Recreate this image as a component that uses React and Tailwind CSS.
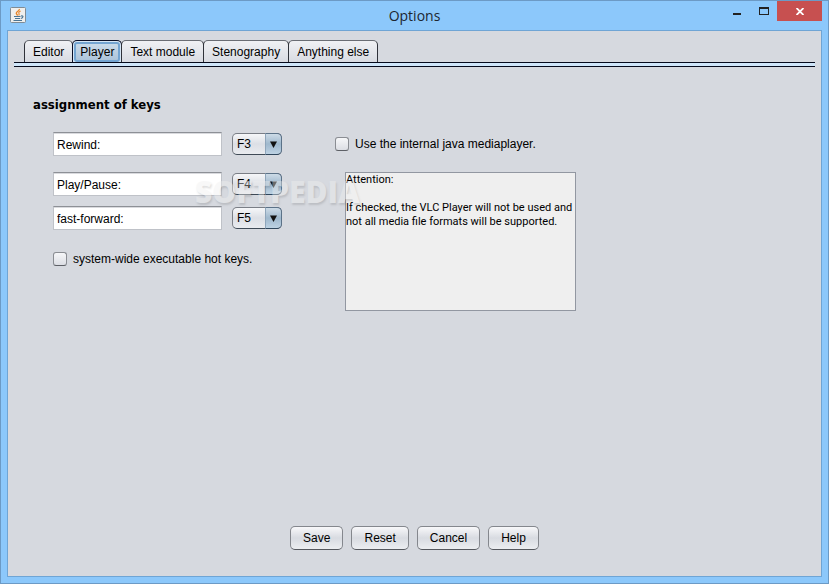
import { useState } from "react";

const TABS = ["Editor", "Player", "Text module", "Stenography", "Anything else"];
const KEYS = ["F1", "F2", "F3", "F4", "F5", "F6", "F7", "F8", "F9", "F10", "F11", "F12"];

const NOTE =
  "Attention:\n\nIf checked, the VLC Player will not be used and not all media file formats will be supported.";

function JavaIcon() {
  return (
    <svg width="16" height="16" viewBox="0 0 16 16" fill="none">
      <rect x="0.5" y="0.5" width="15" height="15" rx="1" fill="#efefed" stroke="#7f8c96" />
      <path d="M9.300 2C9.800 4 6.300 4.300 6.300 6.200C6.300 7.300 7.500 7.600 7.600 8.600" stroke="#e8862a" strokeWidth="1.400" />
      <path d="M10.600 4C9 4.800 8.300 5.500 9 6.500C9.400 7.200 9.200 7.800 8.700 8.400" stroke="#e8862a" strokeWidth="1.100" />
      <path d="M4 9.500H10.500M5 11.500H10M3.500 13.500H12" stroke="#4a7595" strokeWidth="1.200" />
      <path d="M11 9C13.800 8.300 13.400 11 10.800 11.500" stroke="#4a7595" strokeWidth="1.200" />
    </svg>
  );
}

function TitleBar() {
  return (
    <header className="grid h-[29px] grid-cols-[1fr_auto_1fr] items-start px-[6px]">
      <div className="pt-[6px] pl-[3px]">
        <JavaIcon />
      </div>
      <h1 className="pt-[5px] font-['Open_Sans',sans-serif] text-[14px] leading-5 text-[#1c2630]">
        Options
      </h1>
      <div className="flex justify-end">
        <button type="button" aria-label="Minimize" className="flex h-5 w-[27px] justify-center pt-3">
          <span className="h-[2px] w-2 bg-[#222]" />
        </button>
        <button type="button" aria-label="Maximize" className="flex h-5 w-[27px] justify-center pt-[6px]">
          <span className="h-2 w-[10px] border border-t-2 border-[#222]" />
        </button>
        <button type="button" aria-label="Close" className="flex h-5 w-[45px] items-center justify-center bg-[#c75050]">
          <svg width="8" height="7" viewBox="0 0 8 7" stroke="#fff" strokeWidth="1.800">
            <path d="M0.500 0L7.500 7M7.500 0L0.500 7" />
          </svg>
        </button>
      </div>
    </header>
  );
}

function Tab({ name, selected, onSelect }) {
  return (
    <button
      type="button"
      role="tab"
      aria-selected={selected}
      onClick={onSelect}
      className={
        selected
          ? "-ml-px h-[22px] rounded-t-[5px] border border-b-0 border-[#0a0f26] bg-[#d6e6f5] p-px"
          : "-ml-px h-[22px] rounded-t-[5px] border border-b-0 border-[#2f323a] border-t-[#6a6d74] bg-linear-to-b from-[#f0f1f4] to-[#d8dbe2] p-px"
      }
    >
      <span
        className={
          selected
            ? "flex h-5 items-center rounded-[3px] border-2 border-[#73a4d1] bg-linear-to-b from-[#c9dae9] to-[#adc4da] px-1"
            : "flex h-5 items-center px-[7px]"
        }
      >
        {name}
      </span>
    </button>
  );
}

function KeyRow({ label, initialKey }) {
  const [key, setKey] = useState(initialKey);

  return (
    <div className="flex items-center gap-[10px]">
      <input
        type="text"
        aria-label={label}
        defaultValue={label}
        className="h-6 w-[169px] border border-[#bfc2c8] border-t-[#8d9096] bg-white px-[3px] pt-[2px] inset-shadow-[0_1px_0_#d9dade]"
      />
      <div className="relative">
        <select
          aria-label={label}
          value={key}
          onChange={(e) => setKey(e.target.value)}
          className="block h-[22px] w-[50px] appearance-none rounded-[5px] border border-[#7a7e86] border-b-[#3f4a56] bg-linear-to-b from-[#f6f7f9] via-[#dcdfe5] to-[#e9ebef] pl-1"
        >
          {KEYS.map((k) => (
            <option key={k}>{k}</option>
          ))}
        </select>
        <span className="pointer-events-none absolute top-0 right-0 flex h-[22px] w-[17px] items-center justify-center rounded-r-[5px] border border-[#5b7288] border-b-[#2f465c] border-l-[#8fa6bb] bg-linear-to-b from-[#cddbe7] via-[#9fb8cd] to-[#bdd2e3]">
          <svg width="7" height="7" viewBox="0 0 7 7" fill="#111">
            <path d="M0 0.500H7L3.500 7Z" />
          </svg>
        </span>
      </div>
    </div>
  );
}

function CheckOption({ label }) {
  return (
    <label className="flex items-center gap-[6px]">
      <input
        type="checkbox"
        className="size-[14px] appearance-none rounded-[3px] border border-[#8a8d93] border-b-[#5d6066] bg-linear-to-b from-[#f6f7f9] to-[#dcdee4] checked:bg-[#73a4d1]"
      />
      {label}
    </label>
  );
}

export default function App() {
  const [tab, setTab] = useState("Player");

  return (
    <div className="flex h-screen flex-col border border-[#6c9ac5] bg-[#8cc8fb] pb-[6px] font-['Liberation_Sans',Arial,sans-serif] text-[12px] leading-4 text-black">
      <TitleBar />
      <main className="relative mx-[6px] flex flex-1 flex-col border border-[#6fa5d5] bg-[#d6d9df] px-[6px] pt-[9px] pb-[26px]">
        <div role="tablist" className="flex pl-[11px]">
          {TABS.map((name) => (
            <Tab key={name} name={name} selected={name === tab} onSelect={() => setTab(name)} />
          ))}
        </div>
        <div className="h-[5px] shrink-0 border-y border-[#050a1c] bg-[#cfe6fa]" />

        <h2 className="mt-[30px] ml-[19px] font-['DejaVu_Sans_Condensed','DejaVu_Sans',sans-serif] text-[13px] leading-4 font-bold">
          assignment of keys
        </h2>

        <div className="mt-[19px] ml-[39px] flex gap-[53px]">
          <div className="flex flex-col">
            <KeyRow label="Rewind:" initialKey="F3" />
            <div className="mt-4 flex flex-col gap-[10px]">
              <KeyRow label="Play/Pause:" initialKey="F4" />
              <KeyRow label="fast-forward:" initialKey="F5" />
            </div>
            <div className="mt-[21px]">
              <CheckOption label="system-wide executable hot keys." />
            </div>
          </div>
          <div className="pt-1">
            <CheckOption label="Use the internal java mediaplayer." />
            <textarea
              readOnly
              aria-label="Attention"
              value={NOTE}
              className="mt-5 ml-[10px] block h-[139px] w-[231px] resize-none border border-[#9297a1] bg-[#efefef] font-['Roboto',sans-serif] text-[11px] leading-[14px]"
            />
          </div>
        </div>

        <div className="mt-auto flex justify-center gap-2">
          {["Save", "Reset", "Cancel", "Help"].map((name) => (
            <button
              key={name}
              type="button"
              className="h-6 rounded-[5px] border border-[#84878d] border-b-[#55585e] bg-linear-to-b from-[#f8f8fa] via-[#d8dbe1] to-[#eceef1] px-3"
            >
              {name}
            </button>
          ))}
        </div>

        <div className="pointer-events-none absolute top-[141px] left-[187px] font-['Open_Sans',sans-serif] text-[30px] leading-10 font-extrabold text-[#f0f0f0] opacity-40 [text-shadow:1px_2px_2px_rgb(0_0_0/0.3)]">
          SOFTPEDIA
        </div>
      </main>
    </div>
  );
}
